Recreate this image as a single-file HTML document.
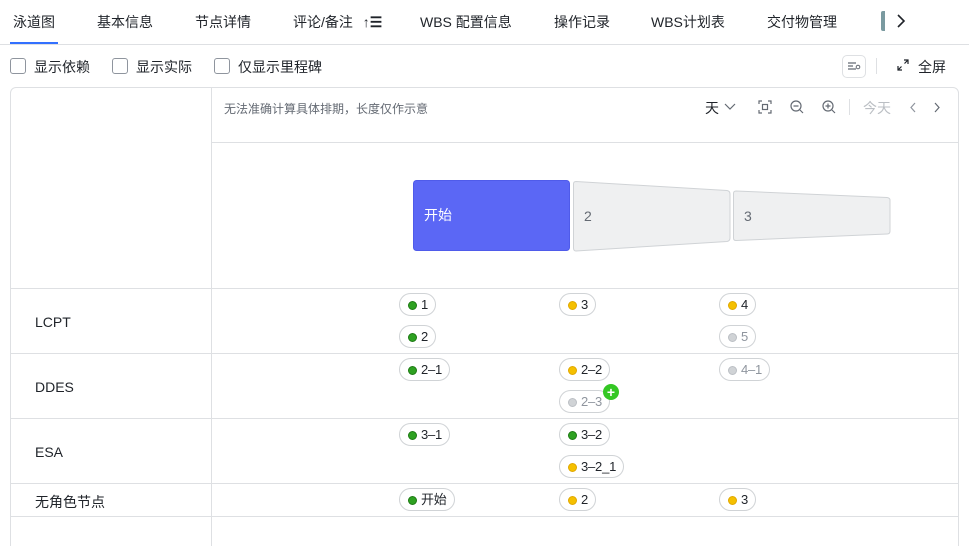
<!DOCTYPE html>
<html><head><meta charset="utf-8"><style>
*{box-sizing:border-box;margin:0;padding:0}
html,body{width:969px;height:546px;overflow:hidden}
body{background:#fff;font-family:"Liberation Sans","Noto Sans CJK SC",sans-serif;color:#1f2329;position:relative}
.a{position:absolute}
.tab{position:absolute;top:12px;font-size:14px;color:#1f2329;white-space:nowrap}
.hl{position:absolute;height:1px;background:#dee0e3}
.vl{position:absolute;width:1px;background:#dee0e3}
.cb{position:absolute;top:58px;width:16px;height:16px;border:1px solid #8f959e;border-radius:3px}
.cbt{position:absolute;top:57px;font-size:14px}
.pill{position:absolute;height:23px;border:1px solid #d0d3d6;border-radius:12px;font-size:13px;padding:0 7px 0 8px;line-height:21px;background:#fff;white-space:nowrap;letter-spacing:-0.2px}
.pill i{display:inline-block;width:9px;height:9px;border-radius:50%;margin-right:4px;vertical-align:-0.5px}
.g{background:#2ea121;border:1px solid #1e7a14}
.y{background:#f5c000;border:1px solid #e0a800}
.n{background:#d0d3d6;border:1px solid #bbbfc4}
.gr{color:#8f959e}
.lane{position:absolute;left:35px;font-size:14px}
</style></head><body>
<div class="tab" style="left:13px">泳道图</div>
<div class="tab" style="left:97px">基本信息</div>
<div class="tab" style="left:195px">节点详情</div>
<div class="tab" style="left:293px">评论/备注 <b style="margin-left:6px">↑☰</b></div>
<div class="tab" style="left:420px">WBS 配置信息</div>
<div class="tab" style="left:554px">操作记录</div>
<div class="tab" style="left:651px">WBS计划表</div>
<div class="tab" style="left:767px">交付物管理</div>
<div class="a" style="left:881px;top:11px;width:4px;height:20px;background:#7a9aa0;border-radius:2px 0 0 2px"></div>
<svg class="a" style="left:896px;top:14px" width="10" height="14"><path d="M2 1l6 6-6 6" stroke="#1f2329" stroke-width="1.6" fill="none"/></svg>
<div class="a" style="left:10px;top:42px;width:48px;height:2px;background:#3370ff"></div>
<div class="hl" style="left:0;top:44px;width:969px"></div>

<div class="cb" style="left:10px"></div><div class="cbt" style="left:34px">显示依赖</div>
<div class="cb" style="left:112px"></div><div class="cbt" style="left:136px">显示实际</div>
<div class="cb" style="left:214px"></div><div class="cbt" style="left:238px">仅显示里程碑</div>
<div class="a" style="left:842px;top:55px;width:24px;height:23px;border:1px solid #dee0e3;border-radius:5px"></div>
<svg class="a" style="left:847px;top:60px" width="14" height="12"><path d="M1 3h8M1 6h5M1 9h8" stroke="#646a73" stroke-width="1.2"/><circle cx="11" cy="7" r="1.8" fill="none" stroke="#646a73"/></svg>
<div class="vl" style="left:876px;top:58px;height:16px"></div>
<svg class="a" style="left:897px;top:59px" width="12" height="12"><path d="M7 1h4v4M11 1L7.5 4.5M5 11H1V7M1 11l3.5-3.5" stroke="#1f2329" fill="none" stroke-width="1.2"/></svg>
<div class="a" style="left:918px;top:57px;font-size:14px">全屏</div>

<div class="a" style="left:10px;top:87px;width:949px;height:470px;border:1px solid #dee0e3;border-radius:6px"></div>
<div class="vl" style="left:211px;top:88px;height:458px"></div>
<div class="hl" style="left:211px;top:142px;width:747px"></div>
<div class="hl" style="left:11px;top:288px;width:947px"></div>
<div class="hl" style="left:11px;top:353px;width:947px"></div>
<div class="hl" style="left:11px;top:418px;width:947px"></div>
<div class="hl" style="left:11px;top:483px;width:947px"></div>
<div class="hl" style="left:11px;top:516px;width:947px"></div>

<div class="a" style="left:224px;top:100px;font-size:12px;color:#646a73">无法准确计算具体排期，长度仅作示意</div>
<div class="a" style="left:705px;top:98px;font-size:14px">天</div>
<svg class="a" style="left:724px;top:103px" width="12" height="8"><path d="M1 1l5 5 5-5" stroke="#646a73" fill="none" stroke-width="1.2"/></svg>
<svg class="a" style="left:758px;top:100px" width="14" height="14"><path d="M1 4V1h3M10 1h3v3M13 10v3h-3M4 13H1v-3" stroke="#646a73" fill="none" stroke-width="1.2"/><rect x="4.5" y="4.5" width="5" height="5" stroke="#646a73" fill="none" stroke-width="1.2"/></svg>
<svg class="a" style="left:790px;top:100px" width="14" height="14"><circle cx="6" cy="6" r="5" stroke="#646a73" fill="none" stroke-width="1.2"/><path d="M3.5 6h5M10 10l3 3" stroke="#646a73" stroke-width="1.2"/></svg>
<svg class="a" style="left:822px;top:100px" width="14" height="14"><circle cx="6" cy="6" r="5" stroke="#646a73" fill="none" stroke-width="1.2"/><path d="M3.5 6h5M6 3.5v5M10 10l3 3" stroke="#646a73" stroke-width="1.2"/></svg>
<div class="vl" style="left:849px;top:99px;height:16px"></div>
<div class="a" style="left:863px;top:98px;font-size:14px;color:#bbbfc4">今天</div>
<svg class="a" style="left:909px;top:102px" width="8" height="11"><path d="M6 1L2 5.5 6 10" stroke="#8f959e" fill="none" stroke-width="1.2"/></svg>
<svg class="a" style="left:933px;top:102px" width="8" height="11"><path d="M2 1l4 4.5L2 10" stroke="#646a73" fill="none" stroke-width="1.2"/></svg>

<svg class="a" style="left:0;top:0" width="969" height="546">
<rect x="413.5" y="180.5" width="156" height="70" rx="3" fill="#5b67f5" stroke="#4f5bea"/>
<path d="M576 181.5 L727 190.5 Q730 191 730 194 L730 238 Q730 241 727 241.5 L576 251 Q573.5 251 573.5 248 L573.5 184 Q573.5 181.5 576 181.5Z" fill="#eff0f1" stroke="#d0d3d6"/>
<path d="M736 191 L887 197.5 Q890 198 890 200 L890 231 Q890 234 887 234 L736 240.5 Q733.5 240.5 733.5 238 L733.5 193.5 Q733.5 191 736 191Z" fill="#eff0f1" stroke="#d0d3d6"/>
<text x="424" y="220" font-size="14" fill="#fff" font-family="Liberation Sans,Noto Sans CJK SC,sans-serif">开始</text>
<text x="584" y="221" font-size="14" fill="#646a73" font-family="Liberation Sans,sans-serif">2</text>
<text x="744" y="221" font-size="14" fill="#646a73" font-family="Liberation Sans,sans-serif">3</text>
</svg>

<div class="lane" style="top:314px">LCPT</div>
<div class="lane" style="top:379px">DDES</div>
<div class="lane" style="top:444px">ESA</div>
<div class="lane" style="top:492px">无角色节点</div>

<div class="pill" style="left:399px;top:293px"><i class="g"></i>1</div>
<div class="pill" style="left:559px;top:293px"><i class="y"></i>3</div>
<div class="pill" style="left:719px;top:293px"><i class="y"></i>4</div>
<div class="pill" style="left:399px;top:325px"><i class="g"></i>2</div>
<div class="pill gr" style="left:719px;top:325px"><i class="n"></i>5</div>
<div class="pill" style="left:399px;top:358px"><i class="g"></i>2–1</div>
<div class="pill" style="left:559px;top:358px"><i class="y"></i>2–2</div>
<div class="pill gr" style="left:719px;top:358px;background:transparent"><i class="n"></i>4–1</div>
<div class="pill gr" style="left:559px;top:390px"><i class="n"></i>2–3</div>
<div class="a" style="left:603px;top:384px;width:16px;height:16px;border-radius:50%;background:#34c724;color:#fff;font-size:14px;font-weight:bold;line-height:16px;text-align:center">+</div>
<div class="pill" style="left:399px;top:423px"><i class="g"></i>3–1</div>
<div class="pill" style="left:559px;top:423px"><i class="g"></i>3–2</div>
<div class="pill" style="left:559px;top:455px"><i class="y"></i>3–2_1</div>
<div class="pill" style="left:399px;top:488px"><i class="g"></i>开始</div>
<div class="pill" style="left:559px;top:488px"><i class="y"></i>2</div>
<div class="pill" style="left:719px;top:488px"><i class="y"></i>3</div>
</body></html>
